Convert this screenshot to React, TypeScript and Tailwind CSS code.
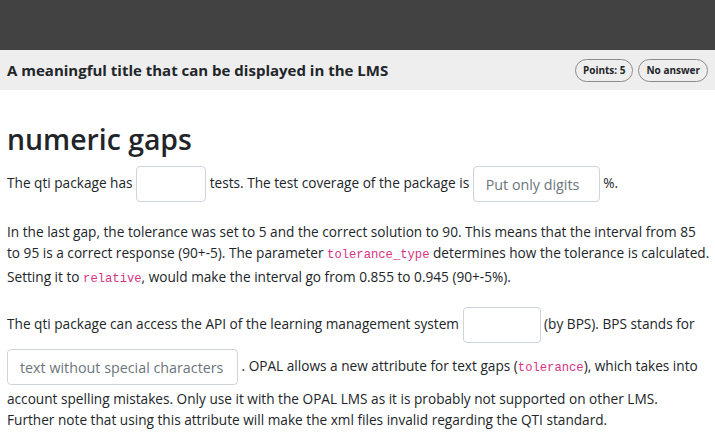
import React from "react";

function Gap({ w, placeholder }: { w: string; placeholder?: string }) {
  return (
    <input
      type="text"
      placeholder={placeholder}
      className={`${w} inline-block h-9 my-[3px] align-middle rounded-[4px] border border-[#ced4da] bg-white px-3 text-[14.3px] text-[#212529] placeholder:text-[#6c757d] outline-none`}
    />
  );
}

function Code({ children }: { children: React.ReactNode }) {
  return <code className="font-['Liberation_Mono',monospace] text-[12.2px] text-[#d63384]">{children}</code>;
}

export default function App() {
  return (
    <div className="w-[715px] min-h-[438px] bg-white font-['Open_Sans',sans-serif] text-[#212529]">
      <div className="h-[50px] bg-[#424242]" />
      <div className="flex h-10 items-center justify-between bg-[#eeeeee] px-[7px]">
        <div className="text-[15px] font-bold text-[#212529]">A meaningful title that can be displayed in the LMS</div>
        <div className="flex items-center gap-[5px]">
          <span className="rounded-full border border-[#8c8c8c] px-[7px] py-[3px] text-[10px] font-bold leading-[15px] text-[#212529]">Points: 5</span>
          <span className="rounded-full border border-[#8c8c8c] px-[7px] py-[3px] text-[10px] font-bold leading-[15px] text-[#212529]">No answer</span>
        </div>
      </div>
      <div className="px-[7px] text-[13.65px] leading-[21px]">
        <h1 className="mt-[32px] mb-[7px] text-[28.4px] font-semibold leading-[1.2]">numeric gaps</h1>
        <p className="mb-4">
          The qti package has <Gap w="w-[70px]" /> tests. The test coverage of the package is{" "}
          <Gap w="w-[127px]" placeholder="Put only digits" /> %.
        </p>
        <p className="mb-[14px] whitespace-nowrap">
          In the last gap, the tolerance was set to 5 and the correct solution to 90. This means that the interval from 85
          <br />
          to 95 is a correct response (90+-5). The parameter <Code>tolerance_type</Code> determines how the tolerance is calculated.
          <br />
          Setting it to <Code>relative</Code>, would make the interval go from 0.855 to 0.945 (90+-5%).
        </p>
        <p className="whitespace-nowrap">
          The qti package can access the API of the learning management system <Gap w="w-[78px]" /> (by BPS). BPS stands for
          <br />
          <Gap w="w-[231px]" placeholder="text without special characters" /> . OPAL allows a new attribute for text gaps (
          <Code>tolerance</Code>), which takes into
          <br />
          account spelling mistakes. Only use it with the OPAL LMS as it is probably not supported on other LMS.
          <br />
          Further note that using this attribute will make the xml files invalid regarding the QTI standard.
        </p>
      </div>
    </div>
  );
}
